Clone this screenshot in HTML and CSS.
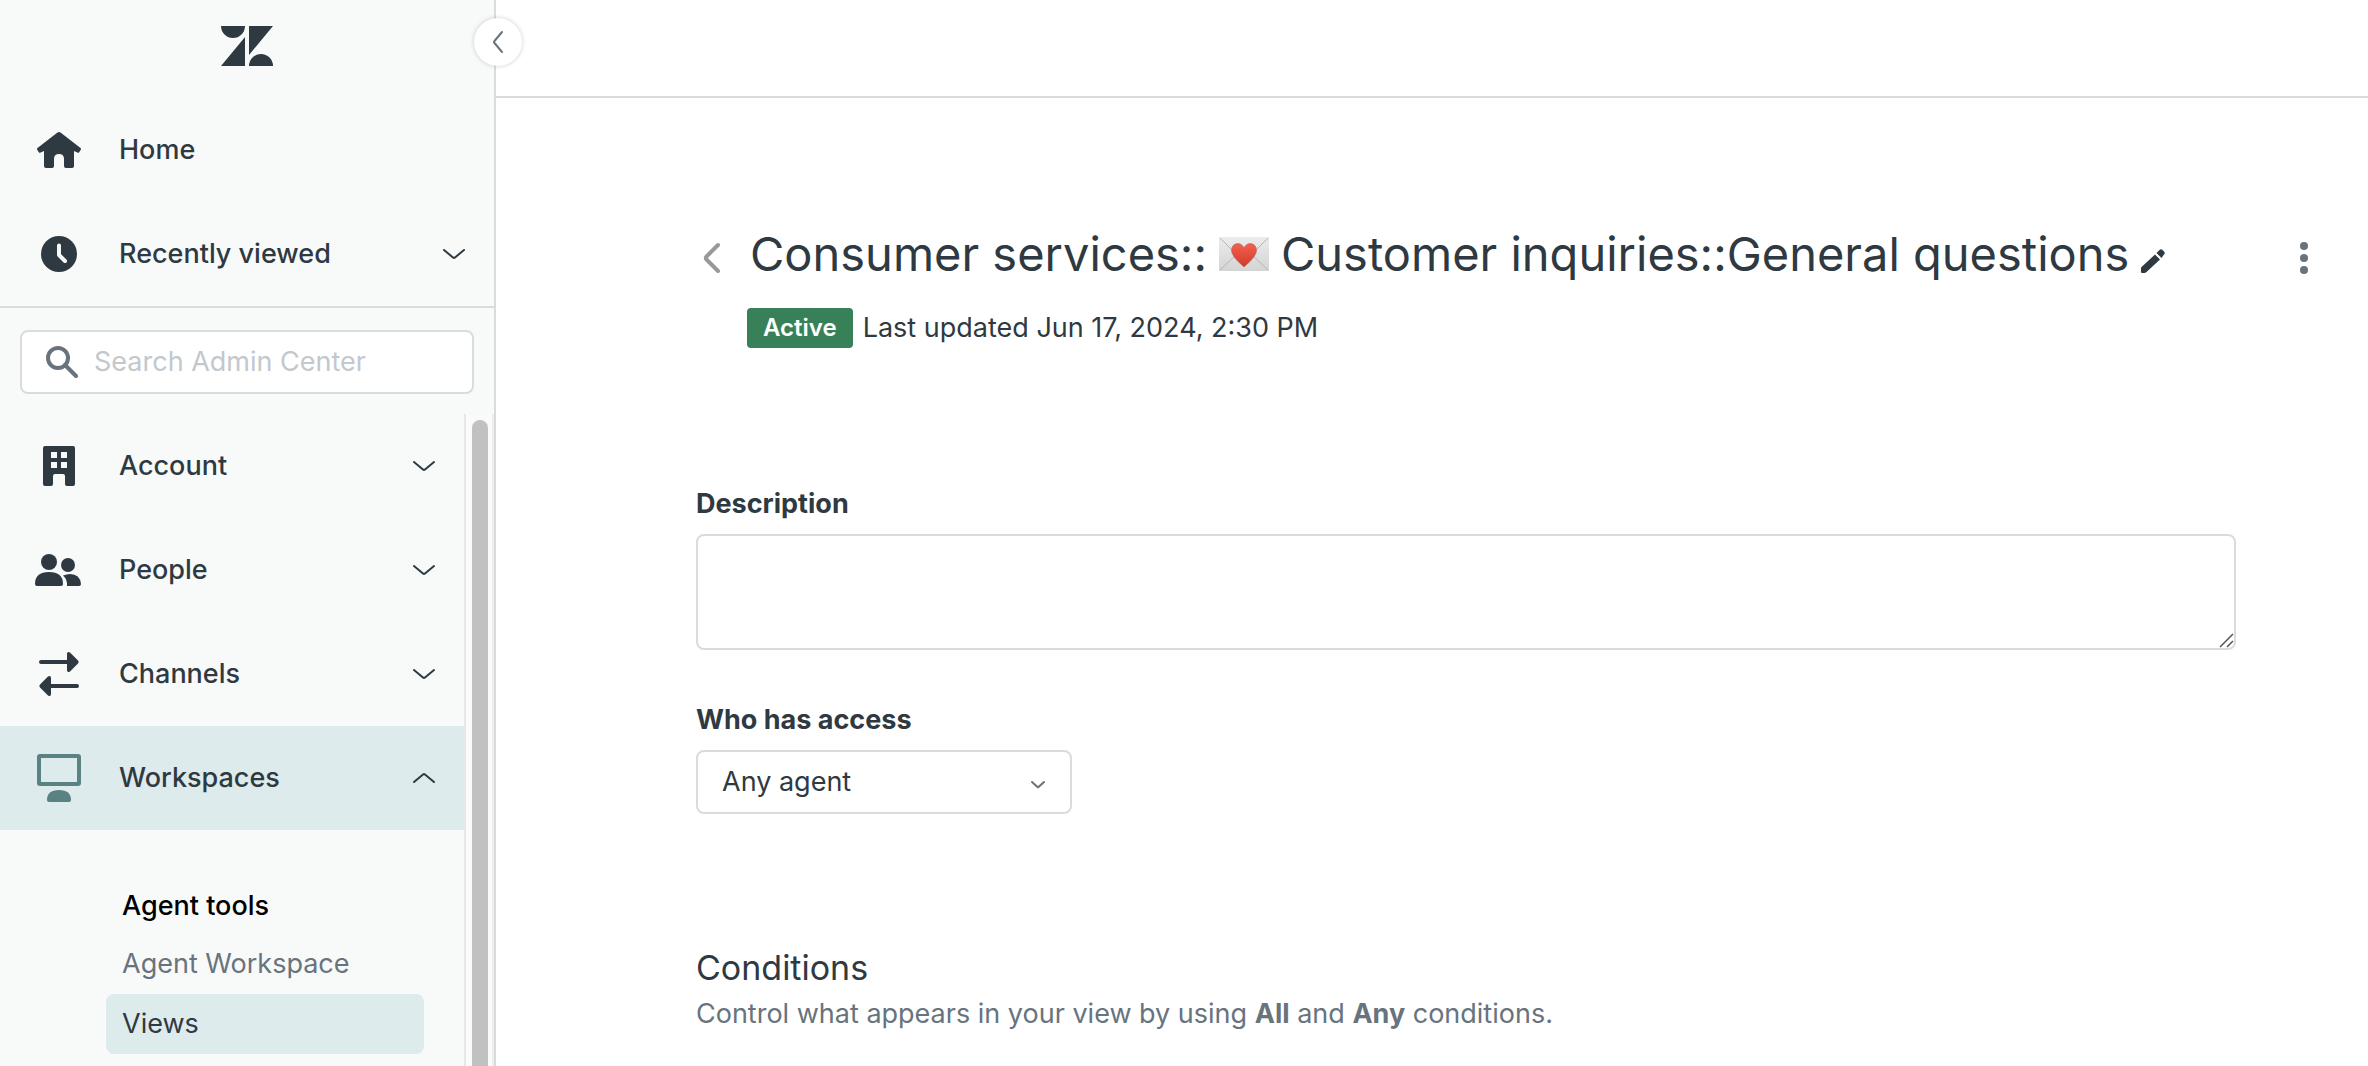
FILE: index.html
```html
<!DOCTYPE html>
<html lang="en">
<head>
    <meta charset="UTF-8">
    <meta name="viewport" content="width=device-width, initial-scale=1.0">
    <title>Admin Center - Views</title>
    <link rel="stylesheet" href="styles.css">
</head>
<body>
    <aside class="sidebar">
        <div class="logo">
            <svg width="52" height="40" viewBox="0 0 52 40" role="img" aria-label="Zendesk">
                <path d="M0 0h24a12 12 0 0 1-24 0zM24 11v29H0zM28 0h24L28 29zM28 40a12 12 0 0 1 24 0z"/>
            </svg>
        </div>
        <button class="collapse-btn" type="button" aria-label="Collapse sidebar">
            <svg width="12" height="24" viewBox="0 0 12 24"><path class="line" d="M10 2L2.500 11q-1 1 0 2L10 22"/></svg>
        </button>
        <nav class="top-nav">
            <a class="nav-item" href="#">
                <svg class="nav-icon" viewBox="0 0 48 48">
                    <path d="M22.500 6.600q1.500-1.200 3 0L45.500 22q1 .8.300 1.800l-1.600 2.400q-.8 1-1.800.2L39 25v15q0 2-2 2h-6q-2 0-2-2v-7q0-5-5-5t-5 5v7q0 2-2 2h-6q-2 0-2-2V25l-3.400 1.400q-1 .8-1.800-.2l-1.600-2.400q-.7-1 .3-1.800z"/>
                </svg>
                <span>Home</span>
            </a>
            <button class="nav-item" type="button">
                <svg class="nav-icon" viewBox="0 0 48 48">
                    <circle cx="24" cy="24" r="18"/>
                    <path class="clock-hands" d="M24 15.500v9.500l6 6"/>
                </svg>
                <span>Recently viewed</span>
                <svg class="chevron" viewBox="0 0 24 12"><path class="line" d="M2 2l9 7.500q1 .8 2 0L22 2"/></svg>
            </button>
        </nav>
        <div class="search">
            <svg viewBox="0 0 32 32"><circle cx="12" cy="12" r="10"/><path d="M19 19l11 11"/></svg>
            <input type="text" placeholder="Search Admin Center" aria-label="Search Admin Center">
        </div>
        <div class="menu">
            <nav class="menu-list">
                <button class="nav-item" type="button">
                    <svg class="nav-icon" viewBox="0 0 48 48">
                        <path fill-rule="evenodd" d="M10 4h28q2 0 2 2v36q0 2-2 2h-6q-2 0-2-2V34q0-2-2-2h-8q-2 0-2 2v8q0 2-2 2h-6q-2 0-2-2V6q0-2 2-2zM16 10v6h6v-6zM26 10v6h6v-6zM16 20v6h6v-6zM26 20v6h6v-6z"/>
                    </svg>
                    <span>Account</span>
                    <svg class="chevron" viewBox="0 0 24 12"><path class="line" d="M2 2l9 7.500q1 .8 2 0L22 2"/></svg>
                </button>
                <button class="nav-item" type="button">
                    <svg class="nav-icon" viewBox="0 0 48 48">
                        <circle cx="14" cy="16" r="8"/>
                        <circle cx="33" cy="19" r="7"/>
                        <path d="M0 38Q0 26 14 26t14 12q0 2-2 2H2q-2 0-2-2zM28 29.500q4-1.500 7-1.500 10 0 11 10 0 2-2 2H32q.5-6.500-4-10.500z"/>
                    </svg>
                    <span>People</span>
                    <svg class="chevron" viewBox="0 0 24 12"><path class="line" d="M2 2l9 7.500q1 .8 2 0L22 2"/></svg>
                </button>
                <button class="nav-item" type="button">
                    <svg class="nav-icon" viewBox="0 0 48 48">
                        <path d="M6 10h26V4q0-3 3-1.500l8 8q1.500 1.500 0 3l-8 8q-3 1.500-3-1.500v-6H6q-2 0-2-2t2-2zM42 34H16v-6q0-3-3-1.500l-8 8q-1.500 1.500 0 3l8 8q3 1.500 3-1.500v-6h26q2 0 2-2t-2-2z"/>
                    </svg>
                    <span>Channels</span>
                    <svg class="chevron" viewBox="0 0 24 12"><path class="line" d="M2 2l9 7.500q1 .8 2 0L22 2"/></svg>
                </button>
                <button class="nav-item active" type="button" aria-expanded="true">
                    <svg class="nav-icon" viewBox="0 0 48 48">
                        <rect class="screen" x="4" y="2" width="40" height="28" rx="1"/>
                        <path d="M12 46q0-10 12-10t12 10q0 2-2 2H14q-2 0-2-2z"/>
                    </svg>
                    <span>Workspaces</span>
                    <svg class="chevron" viewBox="0 0 24 12"><path class="line" d="M2 10l9-7.500q1-.8 2 0L22 10"/></svg>
                </button>
                <div class="submenu">
                    <h2>Agent tools</h2>
                    <a href="#">Agent Workspace</a>
                    <a class="current" href="#" aria-current="page">Views</a>
                </div>
            </nav>
            <div class="scroll-track">
                <div class="scroll-thumb"></div>
            </div>
        </div>
    </aside>

    <div class="page">
        <header class="topbar"></header>
        <main class="content">
            <div class="view-header">
                <a class="back" href="#" aria-label="Back to views">
                    <svg width="20" height="32" viewBox="0 0 20 32"><path d="M16 3L4.500 14.500q-1.500 1.500 0 3L16 29"/></svg>
                </a>
                <div class="view-info">
                    <h1>
                        <span>Consumer services::</span>
                        <svg class="letter" width="50" height="34" viewBox="0 0 50 34" role="img" aria-label="Love letter">
                            <defs>
                                <linearGradient id="paper" x1="0" y1="0" x2="0" y2="1">
                                    <stop offset="0" stop-color="#ececec"/>
                                    <stop offset="1" stop-color="#d4d4d4"/>
                                </linearGradient>
                                <linearGradient id="heart" x1="0" y1="0" x2="0" y2="1">
                                    <stop offset="0" stop-color="#f4604e"/>
                                    <stop offset="1" stop-color="#cf3a2c"/>
                                </linearGradient>
                            </defs>
                            <rect width="50" height="34" rx="1" fill="url(#paper)"/>
                            <path d="M1 33L19 16M49 33L31 16M1 1l20 20q4 4 8 0L49 1" fill="none" stroke="#b4b4b4"/>
                            <path d="M25 30Q12 19 12.500 13 13 7 18.500 6.500 23 6.500 25 11q2-4.500 6.500-4.500Q37 7 37.500 13 38 19 25 30z" fill="url(#heart)" stroke="#a8685f" stroke-width=".6"/>
                        </svg>
                        <span>Customer inquiries::General questions</span>
                        <button class="edit-btn" type="button" aria-label="Edit title">
                            <svg width="24" height="24" viewBox="0 0 24 24"><path d="M0 18.500L14 5.500l5 5L5.500 23Q4.500 24 3 24H1q-1 0-1-1zM15.500 4L18.500 1q1.500-1.500 3 0L23 2.500q1.500 1.500 0 3L20.500 9z"/></svg>
                        </button>
                    </h1>
                    <div class="status">
                        <span class="badge">Active</span>
                        <span>Last updated Jun 17, 2024, 2:30 PM</span>
                    </div>
                </div>
                <button class="more-btn" type="button" aria-label="More options">
                    <svg width="8" height="32" viewBox="0 0 8 32"><circle cx="4" cy="4" r="4"/><circle cx="4" cy="16" r="4"/><circle cx="4" cy="28" r="4"/></svg>
                </button>
            </div>

            <form class="view-form">
                <label for="description">Description</label>
                <textarea id="description"></textarea>
                <label for="access">Who has access</label>
                <div class="select-wrap">
                    <select id="access">
                        <option>Any agent</option>
                    </select>
                    <svg viewBox="0 0 16 10"><path class="line" d="M2 2l5.500 5q.5.500 1 0L14 2"/></svg>
                </div>
            </form>

            <section class="conditions">
                <h2>Conditions</h2>
                <p>Control what appears in your view by using <strong>All</strong> and <strong>Any</strong> conditions.</p>
            </section>
        </main>
    </div>
</body>
</html>
```

FILE: styles.css
```css
* {
    box-sizing: border-box;
}
body {
    margin: 0;
    display: flex;
    height: 100vh;
    overflow: hidden;
    font-family: Inter, sans-serif;
    font-size: 27px;
    line-height: 40px;
    color: #2f3941;
    background-color: #fff;
}
button, input, select, textarea {
    font: inherit;
    color: inherit;
}
button {
    padding: 0;
    border: none;
    background: none;
    cursor: pointer;
}
a {
    color: inherit;
    text-decoration: none;
}
h1, h2, p {
    margin: 0;
}
svg {
    display: block;
    flex-shrink: 0;
    fill: currentColor;
}
.line {
    fill: none;
    stroke: currentColor;
    stroke-width: 2;
    stroke-linecap: round;
}

/* Sidebar */
.sidebar {
    position: relative;
    display: flex;
    flex-direction: column;
    flex-shrink: 0;
    width: 496px;
    background-color: #f8faf9;
    border-right: 2px solid #d8dcde;
}
.logo {
    display: flex;
    justify-content: center;
    padding: 26px 0 32px;
}
.collapse-btn {
    position: absolute;
    top: 18px;
    right: -28px;
    display: flex;
    align-items: center;
    justify-content: center;
    width: 48px;
    height: 48px;
    border-radius: 50%;
    background-color: #fff;
    color: #68737d;
    box-shadow: 0 0 4px rgba(47, 57, 65, 0.25);
}
.top-nav {
    border-bottom: 2px solid #d8dcde;
}
.nav-item {
    display: flex;
    align-items: center;
    width: 100%;
    height: 104px;
    padding: 0 28px 0 35px;
    font-weight: 500;
    text-align: left;
}
.nav-icon {
    width: 48px;
    height: 48px;
    margin-right: 36px;
    overflow: visible;
}
.chevron {
    width: 24px;
    height: 12px;
    margin-left: auto;
}
.clock-hands {
    fill: none;
    stroke: #f8faf9;
    stroke-width: 4;
    stroke-linecap: round;
    stroke-linejoin: round;
}
.screen {
    fill: none;
    stroke: currentColor;
    stroke-width: 4;
}
.nav-item.active {
    background-color: #deebec;
}
.nav-item.active .nav-icon {
    color: #5a8283;
}
.search {
    display: flex;
    align-items: center;
    gap: 16px;
    height: 64px;
    margin: 22px 20px 20px;
    padding: 0 24px;
    border: 2px solid #d8dcde;
    border-radius: 8px;
    background-color: #fff;
}
.search svg {
    width: 32px;
    height: 32px;
    fill: none;
    stroke: #68737d;
    stroke-width: 4;
    stroke-linecap: round;
}
.search input {
    flex: 1;
    min-width: 0;
    padding: 0;
    border: none;
    outline: none;
    background: none;
}
.search input::placeholder {
    color: #c2c8cc;
}
.menu {
    display: flex;
    flex: 1;
    min-height: 0;
}
.menu-list {
    flex: 1;
    overflow: hidden;
}
.scroll-track {
    width: 30px;
    padding: 6px 4px 0 6px;
    border-left: 2px solid #e8e8e8;
    border-right: 2px solid #ededed;
    background-color: #fafafa;
}
.scroll-thumb {
    width: 16px;
    height: 100%;
    border-radius: 8px 8px 0 0;
    background-color: #c1c1c1;
}
.submenu {
    display: flex;
    flex-direction: column;
    padding: 46px 40px 0 106px;
}
.submenu h2, .submenu a {
    padding: 10px 16px;
    border-radius: 8px;
    font-size: 27px;
    font-weight: 400;
}
.submenu h2 {
    padding-bottom: 8px;
    font-weight: 500;
    color: #000;
}
.submenu a {
    color: #68737d;
}
.submenu .current {
    background-color: #deebec;
    color: #2f3941;
}

/* Main area */
.page {
    flex: 1;
    min-width: 0;
}
.topbar {
    height: 98px;
    border-bottom: 2px solid #d8dcde;
}
.content {
    padding: 126px 132px 0 200px;
}
.view-header {
    display: flex;
    align-items: flex-start;
    margin-right: -92px;
}
.back {
    padding: 18px 0;
    margin: 0 25px 0 6px;
}
.back path {
    fill: none;
    stroke: #999;
    stroke-width: 4;
    stroke-linecap: round;
}
.view-info {
    flex: 1;
}
h1 {
    display: flex;
    align-items: center;
    gap: 12px;
    padding-left: 3px;
    font-size: 47px;
    line-height: 60px;
    font-weight: 400;
}
.edit-btn {
    padding-top: 14px;
}
.status {
    display: flex;
    align-items: center;
    gap: 10px;
    margin-top: 24px;
}
.badge {
    padding: 0 16px;
    border-radius: 4px;
    background-color: #388158;
    color: #fff;
    font-size: 24px;
    font-weight: 600;
}
.more-btn {
    padding: 18px 20px;
    color: #68737d;
}
.view-form {
    padding-top: 136px;
}
.view-form label {
    display: block;
    margin-bottom: 10px;
    font-weight: 700;
}
textarea {
    display: block;
    width: 100%;
    height: 116px;
    margin-bottom: 50px;
    padding: 16px 24px;
    border: 2px solid #d8dcde;
    border-radius: 8px;
    outline: none;
    resize: vertical;
}
textarea::-webkit-resizer {
    background: url("data:image/svg+xml,%3Csvg xmlns='http://www.w3.org/2000/svg' viewBox='0 0 15 15'%3E%3Cpath d='M1 14L14 1M8 14l6-6' stroke='%23555' stroke-width='1.500'/%3E%3C/svg%3E") no-repeat;
}
.select-wrap {
    position: relative;
    width: 376px;
}
.select-wrap select {
    display: block;
    width: 100%;
    height: 64px;
    padding: 0 24px;
    border: 2px solid #d8dcde;
    border-radius: 8px;
    background-color: #fff;
    appearance: none;
}
.select-wrap svg {
    position: absolute;
    top: 30px;
    right: 26px;
    width: 16px;
    height: 10px;
    color: #68737d;
    pointer-events: none;
}
.conditions {
    padding-top: 132px;
    color: #68737d;
}
.conditions h2 {
    font-size: 34px;
    line-height: 44px;
    font-weight: 400;
    color: #2f3941;
}
.conditions p {
    margin-top: 4px;
}
.conditions strong {
    font-weight: 700;
}
```
